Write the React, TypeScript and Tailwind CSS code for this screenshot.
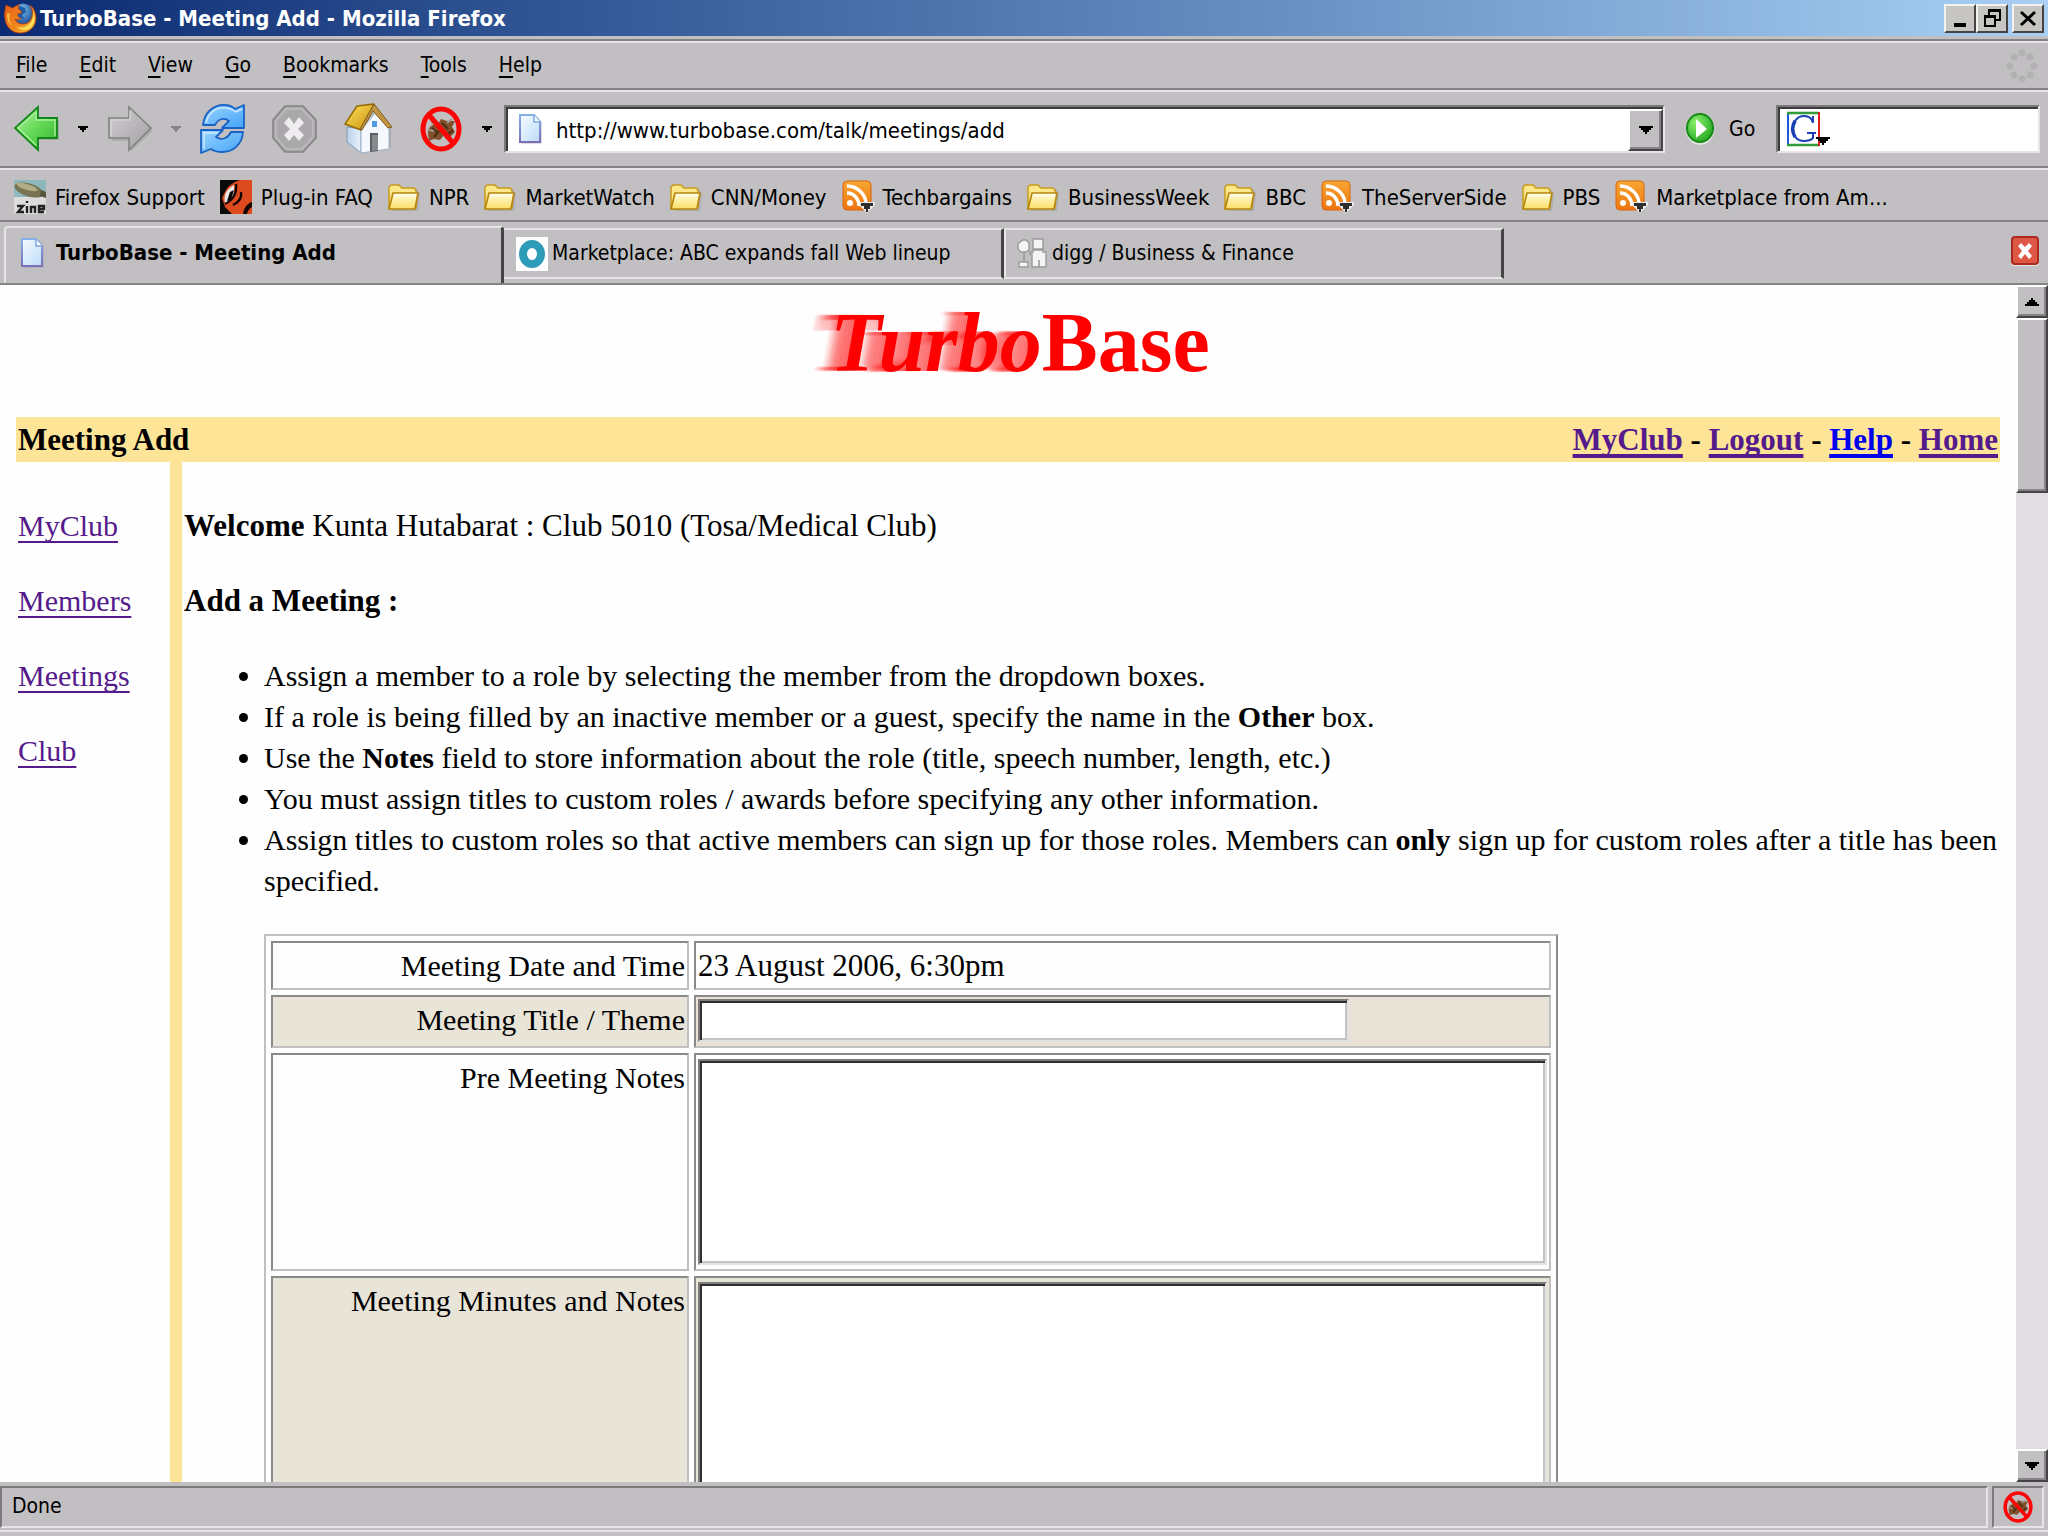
import type { ReactNode } from "react";

const sans = "font-['DejaVu_Sans_Condensed','DejaVu_Sans',sans-serif]";
const serif = "font-['Liberation_Serif',serif]";

function Defs() {
  return (
    <svg width="0" height="0" className="absolute" aria-hidden="true">
      <defs>
        <linearGradient id="green" x1="0" y1="0" x2="1" y2="1">
          <stop offset="0" stopColor="#b6f5a0" />
          <stop offset="0.5" stopColor="#63d957" />
          <stop offset="1" stopColor="#35b52f" />
        </linearGradient>
        <linearGradient id="grey" x1="0" y1="0" x2="1" y2="1">
          <stop offset="0" stopColor="#cfcdcf" />
          <stop offset="1" stopColor="#a3a1a3" />
        </linearGradient>
        <linearGradient id="blue" x1="0" y1="0" x2="1" y2="1">
          <stop offset="0" stopColor="#9bd4ff" />
          <stop offset="1" stopColor="#43a4f8" />
        </linearGradient>
        <linearGradient id="roof" x1="0" y1="0" x2="1" y2="1">
          <stop offset="0" stopColor="#ffe45a" />
          <stop offset="1" stopColor="#c98f10" />
        </linearGradient>
        <linearGradient id="wall" x1="0" y1="0" x2="1" y2="0">
          <stop offset="0" stopColor="#b9d2ea" />
          <stop offset="1" stopColor="#e9f1f9" />
        </linearGradient>
        <linearGradient id="sheet" x1="0" y1="0" x2="1" y2="1">
          <stop offset="0" stopColor="#f6fbff" />
          <stop offset="1" stopColor="#bcdcf8" />
        </linearGradient>
        <linearGradient id="sheetEdge" x1="0" y1="0" x2="0" y2="1">
          <stop offset="0" stopColor="#84b0ea" />
          <stop offset="1" stopColor="#7c70b8" />
        </linearGradient>
        <linearGradient id="folder" x1="0" y1="0" x2="0" y2="1">
          <stop offset="0" stopColor="#fffce0" />
          <stop offset="1" stopColor="#fbdf62" />
        </linearGradient>
        <linearGradient id="feed" x1="0" y1="0" x2="0" y2="1">
          <stop offset="0" stopColor="#f7a632" />
          <stop offset="1" stopColor="#ee7510" />
        </linearGradient>
        <linearGradient id="fox" x1="0" y1="0" x2="1" y2="1">
          <stop offset="0" stopColor="#e8601a" />
          <stop offset="0.6" stopColor="#f08a1c" />
          <stop offset="1" stopColor="#fbd23c" />
        </linearGradient>
        <radialGradient id="globe" cx="0.4" cy="0.3" r="0.8">
          <stop offset="0" stopColor="#7cc4ee" />
          <stop offset="1" stopColor="#173f8c" />
        </radialGradient>
        <radialGradient id="goFill" cx="0.35" cy="0.3" r="0.8">
          <stop offset="0" stopColor="#8bef6c" />
          <stop offset="1" stopColor="#1fa51c" />
        </radialGradient>
      </defs>
    </svg>
  );
}

function FirefoxIcon() {
  return (
    <svg width="34" height="32" viewBox="0 0 34 32" aria-hidden="true">
      <circle cx="19" cy="12" r="10.5" fill="url(#globe)" />
      <path d="M16 4l5 2 1 4-4 3 2 4-5-2-3-5z" fill="#1e5aa8" />
      <path
        d="M2 3C1 8 0 12 1 17c1 8 7 14 15 14 9 0 16-6 16-15 0-5-2-10-6-13 2 4 3 7 2 11-1 5-4 8-9 8-4 0-7-2-8-5 2 1 5 1 6-1-2 0-4-2-3-4 1-1 3-1 4-1 0-2-3-3-4-5 0-1 1-2 2-3-3 0-5 1-7 3C7 5 5 5 2 3z"
        fill="url(#fox)"
        stroke="#b23a0c"
        strokeWidth="0.8"
      />
      <path d="M29 9c1 6-1 12-6 15-3 2-8 2-11 0 3 4 10 5 14 2 5-4 6-11 3-17z" fill="#fbe05a" />
      <path d="M3 12c0 4 1 9 5 12-3-5-3-9-2-13z" fill="#fac23c" />
    </svg>
  );
}

function Caret({ tone = "text-black" }: { tone?: string }) {
  return (
    <svg width="10" height="6" viewBox="0 0 10 6" className={tone} aria-hidden="true">
      <path d="M0 0h10v2H8v2H6v2H4V4H2V2H0z" fill="currentColor" />
    </svg>
  );
}

function WideCaret({ up = false }: { up?: boolean }) {
  return (
    <svg width="14" height="8" viewBox="0 0 14 8" aria-hidden="true">
      {up ? (
        <path d="M6 0h2v2h2v2h2v2h2v2H0V6h2V4h2V2h2z" fill="#000" />
      ) : (
        <path d="M0 0h14v2h-2v2h-2v2H8v2H6V6H4V4H2V2H0z" fill="#000" />
      )}
    </svg>
  );
}

function ArrowIcon({ forward = false }: { forward?: boolean }) {
  return forward ? (
    <svg width="46" height="48" viewBox="0 0 46 48" aria-hidden="true">
      <path d="M21 4v10H2v20h19v10l22-20z" fill="#8d8b8d" opacity="0.35" transform="translate(2 2)" />
      <path d="M21 2v11H1v20h20v12l22-22z" fill="url(#grey)" stroke="#838183" strokeWidth="1.6" />
      <path d="M22 6v9H3v16" fill="none" stroke="#dcdadc" strokeWidth="1.2" />
    </svg>
  ) : (
    <svg width="46" height="48" viewBox="0 0 46 48" aria-hidden="true">
      <path d="M25 4v11h20v20H25v12L3 25z" fill="#6c8a6c" opacity="0.35" />
      <path d="M24 2v11h19v20H24v12L1 23z" fill="url(#green)" stroke="#13861a" strokeWidth="1.8" />
      <path d="M22 7v8h19v16M22 7L4 23l18 17" fill="none" stroke="#a9f09a" strokeWidth="1.3" />
    </svg>
  );
}

function ReloadIcon() {
  return (
    <svg width="46" height="50" viewBox="0 0 46 50" aria-hidden="true">
      <path
        d="M3 21C4 9 13 1 24 1c4 0 8 1 11 4l9-4v23H22l7-7c-5-4-11-2-14 4z"
        fill="url(#blue)"
        stroke="#1b62c4"
        strokeWidth="1.8"
        strokeLinejoin="round"
      />
      <path
        d="M43 28c-1 13-10 20-21 20-4 0-8-1-11-3l-10 4V26h22l-7 7c6 4 12 1 15-5z"
        fill="url(#blue)"
        stroke="#1b62c4"
        strokeWidth="1.8"
        strokeLinejoin="round"
      />
      <path d="M6 19C8 9 16 3 24 4c4 0 8 1 12 4l6-3M4 45V29h14" fill="none" stroke="#cdeaff" strokeWidth="1.4" />
    </svg>
  );
}

function StopIcon() {
  return (
    <svg width="46" height="48" viewBox="0 0 46 48" aria-hidden="true">
      <path d="M13 1h18l13 14v18L31 47H13L1 33V15z" fill="#aaa8aa" stroke="#858385" strokeWidth="1.6" />
      <path d="M14 4h16l11 12v16L30 44H14L4 32V16z" fill="none" stroke="#bfbdbf" strokeWidth="1.4" />
      <path d="M12 18l5-6 5 7 5-7 5 6-6 6 6 6-5 6-5-6-5 6-5-6 6-6z" fill="#efedef" />
    </svg>
  );
}

function HomeIcon() {
  return (
    <svg width="50" height="52" viewBox="0 0 50 52" aria-hidden="true">
      <path d="M4 27l14 22 29-4V24z" fill="#8d8b8d" opacity="0.4" />
      <path d="M3 24v15l14 11V26z" fill="url(#wall)" stroke="#7f9cbc" />
      <path d="M17 50V27L33 8l12 16v22z" fill="#f5f9fd" stroke="#9fb3c8" />
      <path d="M26 49V30h8v18z" fill="#5d5f66" />
      <path d="M28 48V32h6v15z" fill="#8a8a8e" />
      <path d="M28 18h5v6h-5z" fill="#4e9be4" />
      <path d="M1 21L13 3l17-2-13 26z" fill="url(#roof)" stroke="#966a08" strokeWidth="1.5" strokeLinejoin="round" />
      <path d="M30 1l18 23-4 1L29 8 18 27l-2-1z" fill="#c39443" stroke="#7c5a1c" />
    </svg>
  );
}

function NoBugIcon({ small = false }: { small?: boolean }) {
  return (
    <svg width={small ? 30 : 42} height={small ? 32 : 46} viewBox="0 0 42 46" preserveAspectRatio="none" aria-hidden="true">
      <path d="M8 27c0-6 4-9 10-9l3-5 6 2 8 0-3 6 3 5-5 5-6-2-4 5-6-1-5 2z" fill="#80512c" />
      <path d="M12 22l6 5M22 17l6 6M14 31l5-6M27 29l6-5" stroke="#4c2d14" strokeWidth="2" />
      <path d="M11 16l6 3M32 13l-5 4M9 24l5 1M27 33l-3-4" stroke="#9f9a92" strokeWidth="2" />
      <ellipse cx="21" cy="23" rx="18" ry="20" fill="none" stroke="#fb0505" strokeWidth="5" />
      <path d="M9 9l24 28" stroke="#fb0505" strokeWidth="5" />
    </svg>
  );
}

function PageIcon() {
  return (
    <svg width="26" height="32" viewBox="0 0 26 32" className="shrink-0" aria-hidden="true">
      <path d="M3 3h16l5 6v22H3z" fill="#8d8bb0" opacity="0.3" />
      <path d="M2 2h14l6 7v20H2z" fill="url(#sheet)" stroke="url(#sheetEdge)" strokeWidth="2" />
      <path d="M16 2v7h6" fill="#fff" stroke="#7ea9e2" strokeWidth="1.6" />
    </svg>
  );
}

function FolderIcon() {
  return (
    <svg width="32" height="32" viewBox="0 0 32 32" aria-hidden="true">
      <path d="M3 8h26l3 4-2 18H4z" fill="#8d8b8d" opacity="0.35" />
      <path d="M1 28V6l2-2h8l3 3h12l2 2v17z" fill="#fbe88a" stroke="#c79a1a" strokeWidth="1.5" />
      <path d="M1 28L5 12h25l-3 16z" fill="url(#folder)" stroke="#b8860f" strokeWidth="1.7" strokeLinejoin="round" />
      <path d="M6 14h22" stroke="#fffef0" strokeWidth="1.5" />
    </svg>
  );
}

function FeedIcon() {
  return (
    <svg width="34" height="34" viewBox="0 0 34 34" aria-hidden="true">
      <rect x="1" y="1" width="28" height="29" rx="4" fill="url(#feed)" stroke="#d9650c" />
      <circle cx="8" cy="23" r="3" fill="#fff" />
      <path d="M5 13c7 0 12 6 12 13M5 6c11 0 19 9 19 18" fill="none" stroke="#fff" strokeWidth="3.4" />
      <path d="M17 22h16v3l-8 8-8-8z" fill="#eceaec" />
      <path d="M19 23h12v3h-3v3h-2v3h-2v-3h-2v-3h-3z" fill="#2d2d2d" />
    </svg>
  );
}

function ZineIcon() {
  return (
    <svg width="32" height="34" viewBox="0 0 32 34" aria-hidden="true">
      <path d="M0 0h32v20H0z" fill="#8fb8bd" />
      <path d="M0 17h32v17H0z" fill="#dedcda" />
      <ellipse cx="15" cy="10" rx="15" ry="6.5" transform="rotate(17 15 10)" fill="#777353" />
      <ellipse cx="13" cy="7" rx="11" ry="3" transform="rotate(17 13 7)" fill="#b3ad86" />
      <path d="M27 10l5 2v6l-6-2z" fill="#54523b" />
      <path d="M3 26h6l-5 6h6M13 26v7M13 21v2M17 33v-6h4v6M30 32h-5v-6h5v3h-5" fill="none" stroke="#222" strokeWidth="2.4" />
    </svg>
  );
}

function PluginIcon() {
  return (
    <svg width="32" height="34" viewBox="0 0 32 34" aria-hidden="true">
      <path d="M0 0h32v34H0z" fill="#dc4a1e" />
      <path d="M0 0h20C14 2 9 5 6 10L2 18l3 9 7 7H0z" fill="#0a0a0a" />
      <path d="M14 5C7 9 3 14 5 23c6-1 10-8 9-18z" fill="#e9e7e4" />
      <path d="M10 12l4-2-3 10-4 1z" fill="#0a0a0a" />
      <path d="M16 4c1 9-3 16-11 20M21 12c1 5-2 10-8 13" fill="none" stroke="#160603" strokeWidth="2.4" />
      <path d="M32 22c-4 1-8 5-9 12h4c1-4 3-6 5-7z" fill="#160603" />
    </svg>
  );
}

function RingIcon() {
  return (
    <svg width="32" height="34" viewBox="0 0 32 34" aria-hidden="true">
      <path d="M0 0h32v34H0z" fill="#fdfdfd" />
      <ellipse cx="16" cy="17" rx="9" ry="10" fill="none" stroke="#2e9cb8" strokeWidth="8" />
    </svg>
  );
}

function DiggIcon() {
  return (
    <svg width="32" height="34" viewBox="0 0 32 34" aria-hidden="true">
      <g fill="#f5f3f5" stroke="#9b999b" strokeWidth="1.4">
        <path d="M4 5l3-2h3l3 3v7l-3 2H5l-3-3V7z" />
        <path d="M14 15h3v-2h10v2h3v15H16V17h-2z" />
        <path d="M17 2h10v10H17z" />
        <path d="M3 25h9v5H3z" />
      </g>
      <path d="M8 16v8M23 23v7" stroke="#9b999b" strokeWidth="1.6" />
    </svg>
  );
}

function Throbber() {
  return (
    <svg width="32" height="34" viewBox="0 0 32 34" aria-hidden="true">
      <g fill="#b2b0b2">
        <circle cx="16" cy="4" r="3.5" />
        <circle cx="24" cy="8" r="3.5" />
        <circle cx="28" cy="17" r="3.5" />
        <circle cx="24" cy="26" r="3.5" />
        <circle cx="16" cy="30" r="3.5" />
        <circle cx="8" cy="26" r="3.5" />
        <circle cx="4" cy="17" r="3.5" />
        <circle cx="8" cy="8" r="3.5" />
      </g>
    </svg>
  );
}

function GoIcon() {
  return (
    <svg width="30" height="32" viewBox="0 0 30 32" aria-hidden="true">
      <ellipse cx="15" cy="17" rx="14" ry="15" fill="#e4e2e4" />
      <ellipse cx="15" cy="15" rx="13" ry="14" fill="url(#goFill)" stroke="#158a17" strokeWidth="2" />
      <path d="M11 6v19l11-9z" fill="#fff" />
    </svg>
  );
}

function SearchEngineIcon() {
  return (
    <svg width="46" height="36" viewBox="0 0 46 36" aria-hidden="true">
      <path d="M2 2h31v32H2z" fill="#fff" />
      <path d="M2 1v34" stroke="#1f5ad8" strokeWidth="2" />
      <path d="M1 2h32M1 34h32" stroke="#2f9c38" strokeWidth="2.4" />
      <path d="M33 1v34" stroke="#e01b1b" strokeWidth="2" />
      <path d="M27 12C26 7 22 5 18 5 11 5 7 11 7 18s4 12 11 12c4 0 7-1 9-3v-6M21 22h9M27 5v6" fill="none" stroke="#1a3fb4" strokeWidth="2" />
      <path d="M9 10c-3 5-3 11 0 16" fill="none" stroke="#1a3fb4" strokeWidth="3.5" />
      <path d="M30 26h14v2h-2v2h-2v2h-2v2h-2v-2h-2v-2h-2v-2h-2z" fill="#000" />
    </svg>
  );
}

const raised =
  "border-2 border-t-white border-l-white border-r-[#454345] border-b-[#454345] bg-[#c1bfc1] shadow-[inset_-2px_-2px_0_#858385]";
const sunken = "border-2 border-t-[#7b797b] border-l-[#7b797b] border-r-[#e6e4e6] border-b-[#e6e4e6]";

function WindowButton({ label, children }: { label: string; children: ReactNode }) {
  return (
    <button
      aria-label={label}
      className="flex h-[29px] w-8 items-center justify-center border-2 border-t-[#f2f2f2] border-l-[#f2f2f2] border-r-[#454345] border-b-[#454345] bg-[#c6c5c2]"
    >
      <svg width="18" height="20" viewBox="0 0 18 20" fill="none" stroke="#000" strokeWidth="2" aria-hidden="true">
        {children}
      </svg>
    </button>
  );
}

const menus = ["File", "Edit", "View", "Go", "Bookmarks", "Tools", "Help"];

const bookmarks: { label: string; icon: ReactNode }[] = [
  { label: "Firefox Support", icon: <ZineIcon /> },
  { label: "Plug-in FAQ", icon: <PluginIcon /> },
  { label: "NPR", icon: <FolderIcon /> },
  { label: "MarketWatch", icon: <FolderIcon /> },
  { label: "CNN/Money", icon: <FolderIcon /> },
  { label: "Techbargains", icon: <FeedIcon /> },
  { label: "BusinessWeek", icon: <FolderIcon /> },
  { label: "BBC", icon: <FolderIcon /> },
  { label: "TheServerSide", icon: <FeedIcon /> },
  { label: "PBS", icon: <FolderIcon /> },
  { label: "Marketplace from Am...", icon: <FeedIcon /> },
];

function Chrome() {
  return (
    <header className="shrink-0">
      <div className="flex h-9 items-center bg-linear-to-r from-[#0c2a72] to-[#a9d0f3] pr-1 pl-1">
        <FirefoxIcon />
        <h1 className="ml-0.5 text-[22px] font-bold whitespace-nowrap text-white">
          TurboBase - Meeting Add - Mozilla Firefox
        </h1>
        <div className="ml-auto flex">
          <WindowButton label="Minimize">
            <path d="M3 17h12" strokeWidth="4" />
          </WindowButton>
          <WindowButton label="Restore">
            <path d="M6 7V2h11v10h-5M6 3h11" />
            <path d="M2 8h10v10H2zM2 9h10" />
          </WindowButton>
          <div className="w-1" />
          <WindowButton label="Close">
            <path d="M2 4l14 13M16 4L2 17" strokeWidth="3" />
          </WindowButton>
        </div>
      </div>
      <div className="h-[5px] border-b-2 border-[#858385]" />

      <nav aria-label="Menu" className="flex h-[49px] items-center border-t-2 border-b-2 border-t-[#e6e4e6] border-b-[#858385] pr-2.5">
        {menus.map((m) => (
          <button key={m} className="px-4 text-[21px]">
            <span className="underline decoration-2 underline-offset-4">{m[0]}</span>
            {m.slice(1)}
          </button>
        ))}
        <div className="ml-auto">
          <Throbber />
        </div>
      </nav>

      <div className="flex h-[78px] items-center border-t-2 border-b-2 border-t-[#e6e4e6] border-b-[#858385] pr-2 pl-3.5">
        <button aria-label="Back" className="w-11">
          <ArrowIcon />
        </button>
        <button aria-label="Back history" className="flex w-[50px] justify-center">
          <Caret />
        </button>
        <button aria-label="Forward" className="w-11">
          <ArrowIcon forward />
        </button>
        <button aria-label="Forward history" className="flex w-12 justify-center">
          <Caret tone="text-[#858385]" />
        </button>
        <button aria-label="Reload" className="mr-7 w-11">
          <ReloadIcon />
        </button>
        <button aria-label="Stop" className="mr-7 w-11">
          <StopIcon />
        </button>
        <button aria-label="Home" className="mr-7 w-12">
          <HomeIcon />
        </button>
        <button aria-label="Block scripts" className="w-[42px]">
          <NoBugIcon />
        </button>
        <button aria-label="Block options" className="flex w-[42px] justify-center pl-2">
          <Caret />
        </button>
        <div className={`flex h-12 flex-1 ${sunken} bg-white shadow-[inset_2px_2px_0_#3c3a3c]`}>
          <label htmlFor="url" className="flex w-[50px] items-center pl-3" aria-label="Address">
            <PageIcon />
          </label>
          <input
            id="url"
            className="min-w-0 flex-1 bg-transparent pt-0.5 text-[22px] outline-none"
            defaultValue="http://www.turbobase.com/talk/meetings/add"
          />
          <button aria-label="Show history" className={`mt-0.5 flex w-[35px] items-center justify-center ${raised}`}>
            <WideCaret />
          </button>
        </div>
        <button className="flex w-[111px] items-center gap-3.5 pl-5 text-[21px]">
          <GoIcon />
          <span className="pt-0.5">Go</span>
        </button>
        <div className={`flex h-12 w-[264px] items-center ${sunken} bg-white shadow-[inset_2px_2px_0_#3c3a3c]`}>
          <button aria-label="Choose search engine" className="pl-2">
            <SearchEngineIcon />
          </button>
          <input aria-label="Search" className="min-w-0 flex-1 bg-transparent text-[22px] outline-none" />
        </div>
      </div>

      <div className="flex h-[54px] items-center gap-[15px] border-t-2 border-b-2 border-t-[#e6e4e6] border-b-[#858385] pt-1 pl-3.5">
        {bookmarks.map((b) => (
          <button key={b.label} className="flex items-center text-[22px] whitespace-nowrap">
            <span className="w-[41px]">{b.icon}</span>
            {b.label}
          </button>
        ))}
      </div>

      <div role="tablist" aria-label="Tabs" className="flex h-[63px] items-end border-b-2 border-[#858385] pr-2 pl-1">
        <button
          role="tab"
          aria-selected="true"
          className="flex h-[57px] w-[500px] items-center self-end rounded-t border-t-2 border-r-3 border-l-2 border-t-[#e6e4e6] border-r-[#454345] border-l-[#e6e4e6] pb-1.5 pl-3.5 text-[22px] font-bold"
        >
          <PageIcon />
          <span className="ml-2.5">TurboBase - Meeting Add</span>
        </button>
        <button
          role="tab"
          aria-selected="false"
          className="mb-1 flex h-[51px] w-[500px] items-center border-t-2 border-r-3 border-b-2 border-t-[#e6e4e6] border-r-[#454345] border-b-[#e6e4e6] pl-3 text-[21px]"
        >
          <RingIcon />
          <span className="ml-1">Marketplace: ABC expands fall Web lineup</span>
        </button>
        <button
          role="tab"
          aria-selected="false"
          className="mb-1 flex h-[51px] w-[500px] items-center border-t-2 border-r-3 border-b-2 border-l-2 border-t-[#e6e4e6] border-r-[#454345] border-b-[#e6e4e6] border-l-[#e6e4e6] pl-2.5 text-[21px]"
        >
          <DiggIcon />
          <span className="ml-1">digg / Business &amp; Finance</span>
        </button>
        <button aria-label="Close tab" className="mb-4 ml-auto">
          <svg width="30" height="32" viewBox="0 0 30 32" aria-hidden="true">
            <rect x="1" y="2" width="28" height="29" rx="3" fill="#e9e4e4" />
            <rect x="2" y="2" width="26" height="27" rx="3" fill="#de5744" stroke="#a92a20" strokeWidth="2" />
            <path d="M8 11l3-3 4 4 4-4 3 3-4 5 4 5-3 3-4-5-4 5-3-3 4-5z" fill="#fff" />
          </svg>
        </button>
      </div>
    </header>
  );
}

function NavLink({ children }: { children: ReactNode }) {
  return (
    <a href="#" className="text-[#551a8b] underline decoration-2 underline-offset-[5px]">
      {children}
    </a>
  );
}

const cell = "border-2 border-t-[#8a8a8a] border-l-[#8a8a8a] border-r-[#c0c0c0] border-b-[#c0c0c0] p-0.5 align-top font-normal";
const field =
  "block border-2 border-t-[#7c7c7c] border-l-[#7c7c7c] border-r-[#e2e2e2] border-b-[#e2e2e2] bg-white px-1 shadow-[inset_2px_2px_0_#303030,inset_-2px_-2px_0_#c4c4c4] outline-none resize-none";

function MeetingForm() {
  return (
    <table className="mt-[33px] ml-20 border-separate border-spacing-[5px] border-2 border-t-[#c0c0c0] border-r-[#8a8a8a] border-b-[#8a8a8a] border-l-[#c0c0c0] text-[30px] leading-[41px]">
      <tbody>
        <tr>
          <th scope="row" className={`${cell} w-[418px] text-right`}>Meeting Date and Time</th>
          <td className={`${cell} w-[857px] text-[31px]`}>23 August 2006, 6:30pm</td>
        </tr>
        <tr className="bg-[#e8e4d8]">
          <th scope="row" className={`${cell} text-right`}>
            <label htmlFor="title">Meeting Title / Theme</label>
          </th>
          <td className={`${cell} bg-[#e9e3d7]`}>
            <input id="title" className={`${field} mb-0.5 h-[43px] w-[651px]`} />
          </td>
        </tr>
        <tr>
          <th scope="row" className={`${cell} text-right`}>
            <label htmlFor="pre">Pre Meeting Notes</label>
          </th>
          <td className={cell}>
            <textarea id="pre" className={`${field} my-0.5 h-[206px] w-full`} />
          </td>
        </tr>
        <tr className="bg-[#e8e4d8]">
          <th scope="row" className={`${cell} text-right`}>
            <label htmlFor="minutes">Meeting Minutes and Notes</label>
          </th>
          <td className={cell}>
            <textarea id="minutes" className={`${field} my-0.5 h-[206px] w-full`} />
          </td>
        </tr>
      </tbody>
    </table>
  );
}

const topLink = "underline decoration-4 underline-offset-4 [text-decoration-skip-ink:none]";

function Page() {
  return (
    <main className={`${serif} min-h-0 min-w-0 flex-1 overflow-hidden bg-[#fdfefd] px-4 text-[30px] leading-[41px] text-black`}>
      <div className="flex h-[132px] justify-center pt-[10px] pl-6 text-[84px] leading-[96px] font-bold whitespace-nowrap text-[#ff0000]">
        <span className="italic [text-shadow:-2px_0_#ff000026,-4px_0_#ff000026,-6px_0_#ff000020,-8px_0_#ff000020,-10px_0_#ff000020,-12px_0_#ff000020,-14px_0_1px_#ff000020,-16px_0_1px_#ff00001c,-18px_0_1px_#ff00001c,-20px_0_2px_#ff000018,-22px_0_2px_#ff000014,-24px_0_2px_#ff000010]">
          Turbo
        </span>
        <span>Base</span>
      </div>

      <div className="flex justify-between bg-[#fde497] p-0.5 text-[31px] font-bold">
        <h2>Meeting Add</h2>
        <p>
          <a href="#" className={`${topLink} text-[#551a8b]`}>MyClub</a> -{" "}
          <a href="#" className={`${topLink} text-[#551a8b]`}>Logout</a> -{" "}
          <a href="#" className={`${topLink} text-[#0000ee]`}>Help</a> -{" "}
          <a href="#" className={`${topLink} text-[#551a8b]`}>Home</a>
        </p>
      </div>

      <div className="flex min-h-full">
        <nav aria-label="Sections" className="flex w-[154px] shrink-0 flex-col items-start gap-[34px] pt-[43px] pl-0.5 [text-decoration-skip-ink:none]">
          <NavLink>MyClub</NavLink>
          <NavLink>Members</NavLink>
          <NavLink>Meetings</NavLink>
          <NavLink>Club</NavLink>
        </nav>
        <div className="w-3 shrink-0 bg-[#fde497]" />
        <section className="min-w-0 flex-1 pt-[43px] pl-0.5">
          <p className="mb-[34px] text-[31px]">
            <b>Welcome</b> Kunta Hutabarat : Club 5010 (Tosa/Medical Club)
          </p>
          <h3 className="mb-[34px] text-[31px] font-bold">Add a Meeting :</h3>
          <ul className="list-disc pl-20">
            <li>Assign a member to a role by selecting the member from the dropdown boxes.</li>
            <li>
              If a role is being filled by an inactive member or a guest, specify the name in the <b>Other</b> box.
            </li>
            <li>
              Use the <b>Notes</b> field to store information about the role (title, speech number, length, etc.)
            </li>
            <li>You must assign titles to custom roles / awards before specifying any other information.</li>
            <li>
              Assign titles to custom roles so that active members can sign up for those roles. Members can <b>only</b>{" "}
              sign up for custom roles after a title has been specified.
            </li>
          </ul>
          <MeetingForm />
        </section>
      </div>
    </main>
  );
}

function ScrollBar() {
  return (
    <aside aria-label="Scroll" className="flex w-8 shrink-0 flex-col bg-[#e0dee0]">
      <button aria-label="Scroll up" className={`flex h-[33px] items-center justify-center ${raised}`}>
        <WideCaret up />
      </button>
      <div className={`h-[175px] ${raised}`} />
      <button aria-label="Scroll down" className={`mt-auto flex h-[33px] items-center justify-center ${raised}`}>
        <WideCaret />
      </button>
    </aside>
  );
}

export default function App() {
  return (
    <div className={`${sans} flex h-screen flex-col overflow-hidden bg-[#c1bfc1] text-black`}>
      <Defs />
      <Chrome />
      <div className="flex min-h-0 flex-1">
        <Page />
        <ScrollBar />
      </div>
      <footer className="flex h-[54px] shrink-0 flex-col justify-start pt-1 text-[21px]">
        <div className="flex h-[42px] gap-1 pr-1">
          <div className={`flex flex-1 items-center pl-2.5 ${sunken}`}>Done</div>
          <div className={`flex w-[52px] items-center justify-center ${sunken}`}>
            <NoBugIcon small />
          </div>
        </div>
        <div className="mt-0.5 h-0.5 bg-[#e6e4e6]" />
      </footer>
    </div>
  );
}
